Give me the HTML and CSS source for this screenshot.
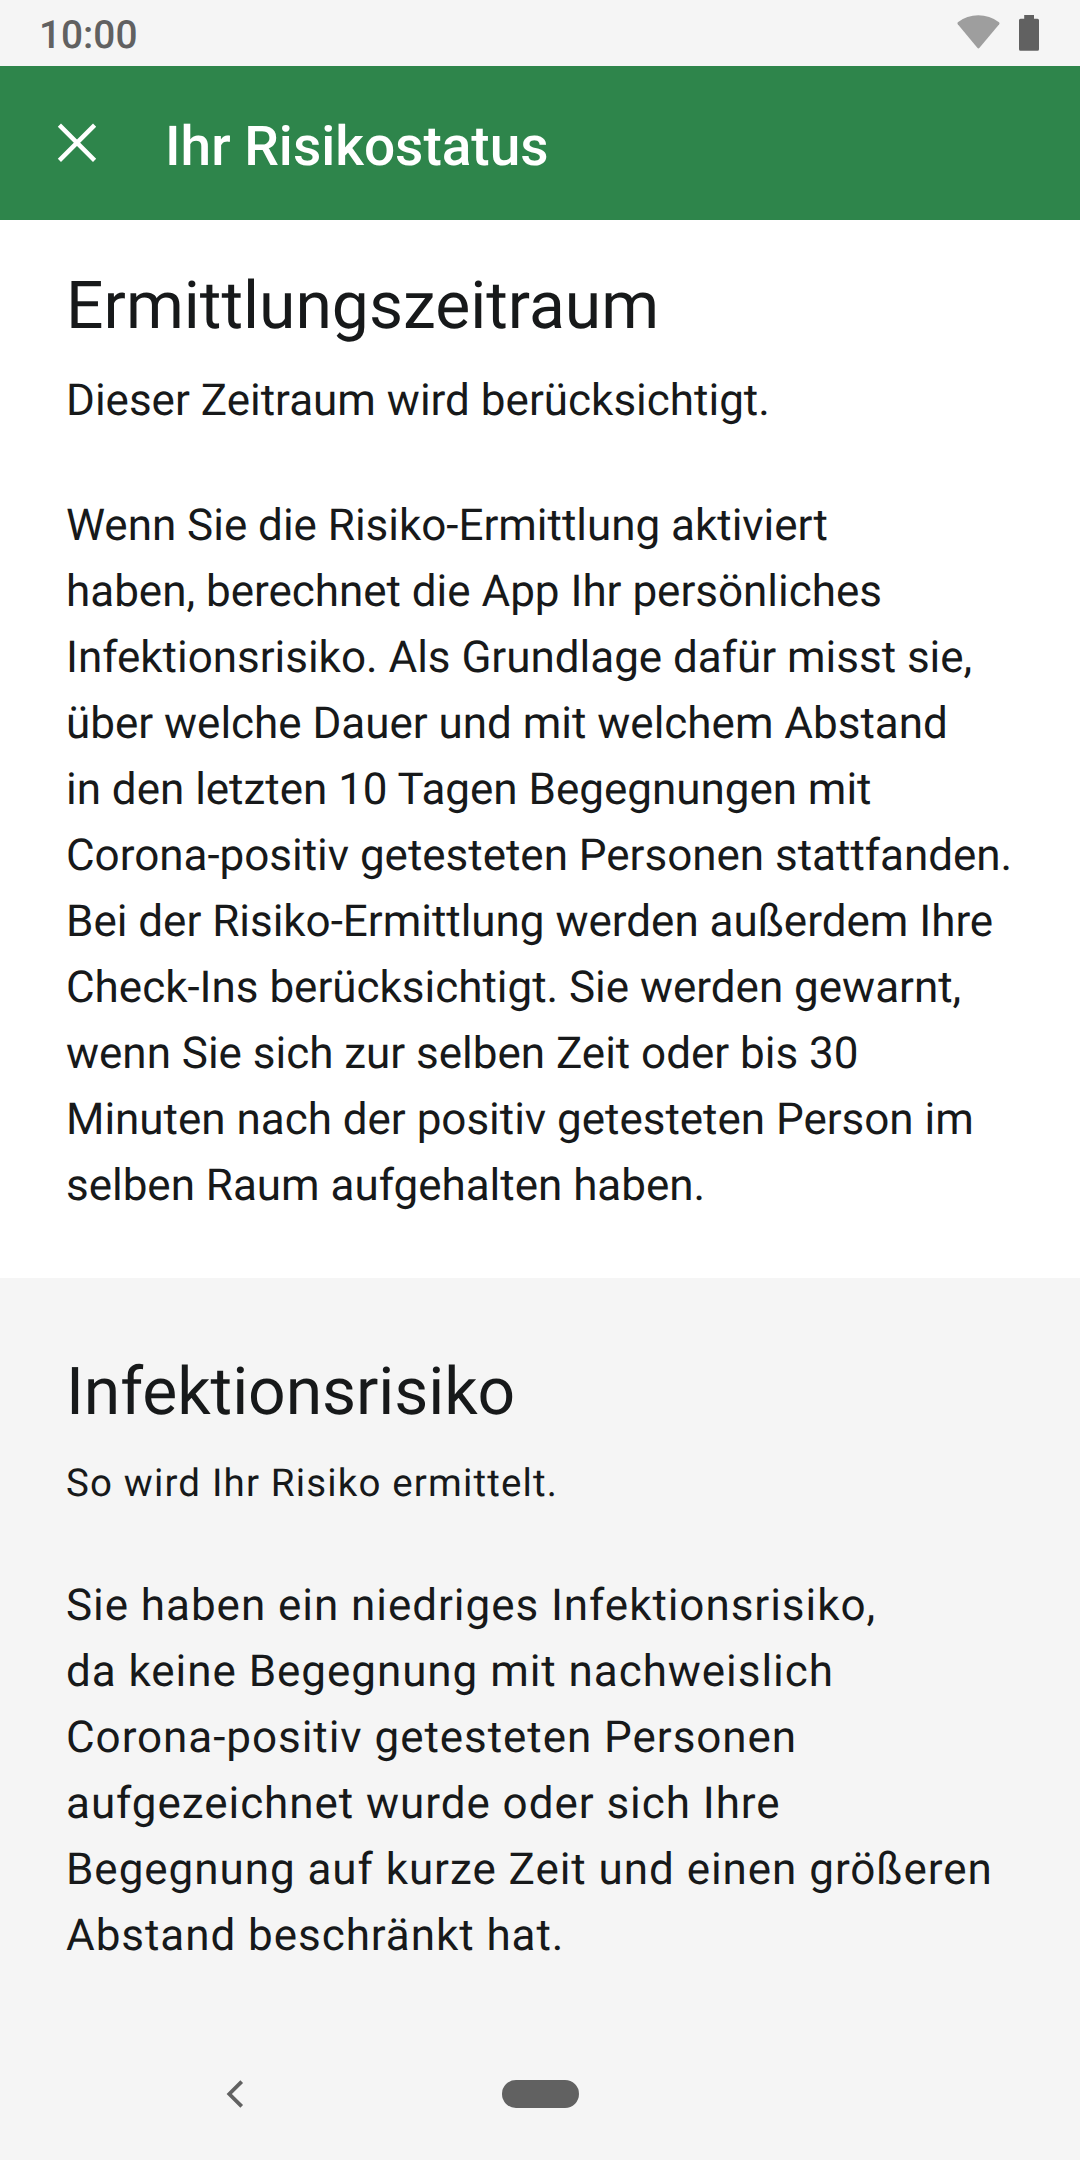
FILE: index.html
```html
<!DOCTYPE html>
<html lang="de">
<head>
<meta charset="utf-8">
<title>Ihr Risikostatus</title>
<link rel="stylesheet" href="styles.css">
</head>
<body>
<div class="status-bar">
  <span class="clock">10:00</span>
  <div class="status-icons">
    <svg class="wifi" width="43" height="34" viewBox="0 0 43 34"><path d="M.8 7.200Q10 .3 21.300.3T42 7.200Q43 8.200 42.200 9.300L22.500 32.800Q21.400 34 20.300 32.800L.8 9.300Q0 8.200.8 7.200Z" fill="#9e9e9e"/></svg>
    <svg class="battery" width="20" height="36" viewBox="0 0 20 36"><path d="M5.200 0h9.800v3.700h3.500Q20 3.700 20 5.200V34.300Q20 35.800 18.500 35.800h-17Q0 35.800 0 34.300V5.200Q0 3.700 1.500 3.700h3.700Z" fill="#616161"/></svg>
  </div>
</div>
<header class="toolbar">
  <svg class="close" width="40" height="40" viewBox="0 0 40 40"><path d="M2.400 2.200L37.600 37.400M37.600 2.200L2.400 37.400" stroke="#fff" stroke-width="4.500" fill="none"/></svg>
  <h1 class="title">Ihr Risikostatus</h1>
</header>
<main class="content">
  <section class="period">
    <h2 class="headline">Ermittlungszeitraum</h2>
    <p class="subtitle">Dieser Zeitraum wird berücksichtigt.</p>
    <p class="body">Wenn Sie die Risiko-Ermittlung aktiviert<br>haben, berechnet die App Ihr persönliches<br>Infektionsrisiko. Als Grundlage dafür misst sie,<br>über welche Dauer und mit welchem Abstand<br>in den letzten 10 Tagen Begegnungen mit<br>Corona-positiv getesteten Personen stattfanden.<br>Bei der Risiko-Ermittlung werden außerdem Ihre<br>Check-Ins berücksichtigt. Sie werden gewarnt,<br>wenn Sie sich zur selben Zeit oder bis 30<br>Minuten nach der positiv getesteten Person im<br>selben Raum aufgehalten haben.</p>
  </section>
  <section class="risk">
    <h2 class="headline">Infektionsrisiko</h2>
    <p class="subtitle">So wird Ihr Risiko ermittelt.</p>
    <p class="body">Sie haben ein niedriges Infektionsrisiko,<br>da keine Begegnung mit nachweislich<br>Corona-positiv getesteten Personen<br>aufgezeichnet wurde oder sich Ihre<br>Begegnung auf kurze Zeit und einen größeren<br>Abstand beschränkt hat.</p>
  </section>
</main>
<nav class="nav-bar">
  <svg class="back" width="18" height="28" viewBox="0 0 18 28"><path d="M15.700 1.700L3.300 14L15.700 26.300" stroke="#616161" stroke-width="3.800" fill="none"/></svg>
  <span class="home"></span>
</nav>
</body>
</html>
```

FILE: styles.css
```css
* { box-sizing: border-box; }
body { margin: 0; width: 1080px; height: 2160px; display: flex; flex-direction: column; overflow: hidden; background: #f5f5f5; color: #17191a; font-family: Roboto, sans-serif; font-weight: 400; text-rendering: geometricPrecision; }
h1, h2, p { margin: 0; font-weight: 400; white-space: nowrap; }
.status-bar { height: 66px; flex: none; display: flex; justify-content: space-between; padding: 0 41px 0 39px; background: #f5f5f5; }
.clock { font-size: 38.800px; line-height: 71px; font-weight: 500; color: #616161; }
.status-icons { display: flex; gap: 19px; padding-top: 15px; }
.toolbar { height: 154px; flex: none; display: flex; padding-left: 57px; background: #2e854b; }
.close { margin-top: 57px; }
.title { margin-left: 68px; font-size: 55px; line-height: 162px; font-weight: 500; color: #fff; }
.period { height: 1058px; padding: 47px 66px 0; background: #fff; }
.risk { padding: 75px 66px 0; }
.headline { font-size: 66px; line-height: 80px; }
.subtitle { margin-top: 20px; font-size: 44px; line-height: 66px; }
.body { margin-top: 59px; font-size: 44px; line-height: 66px; letter-spacing: -0.020px; }
.risk .headline { letter-spacing: -0.080px; }
.risk .subtitle { margin-top: 18px; font-size: 38.500px; letter-spacing: 1.160px; }
.risk .body { margin-top: 55px; letter-spacing: 0.950px; }
.nav-bar { height: 132px; flex: none; margin-top: auto; display: flex; align-items: center; padding-left: 226px; }
.home { width: 77px; height: 28px; margin-left: 258px; border-radius: 14px; background: #616161; }
```
